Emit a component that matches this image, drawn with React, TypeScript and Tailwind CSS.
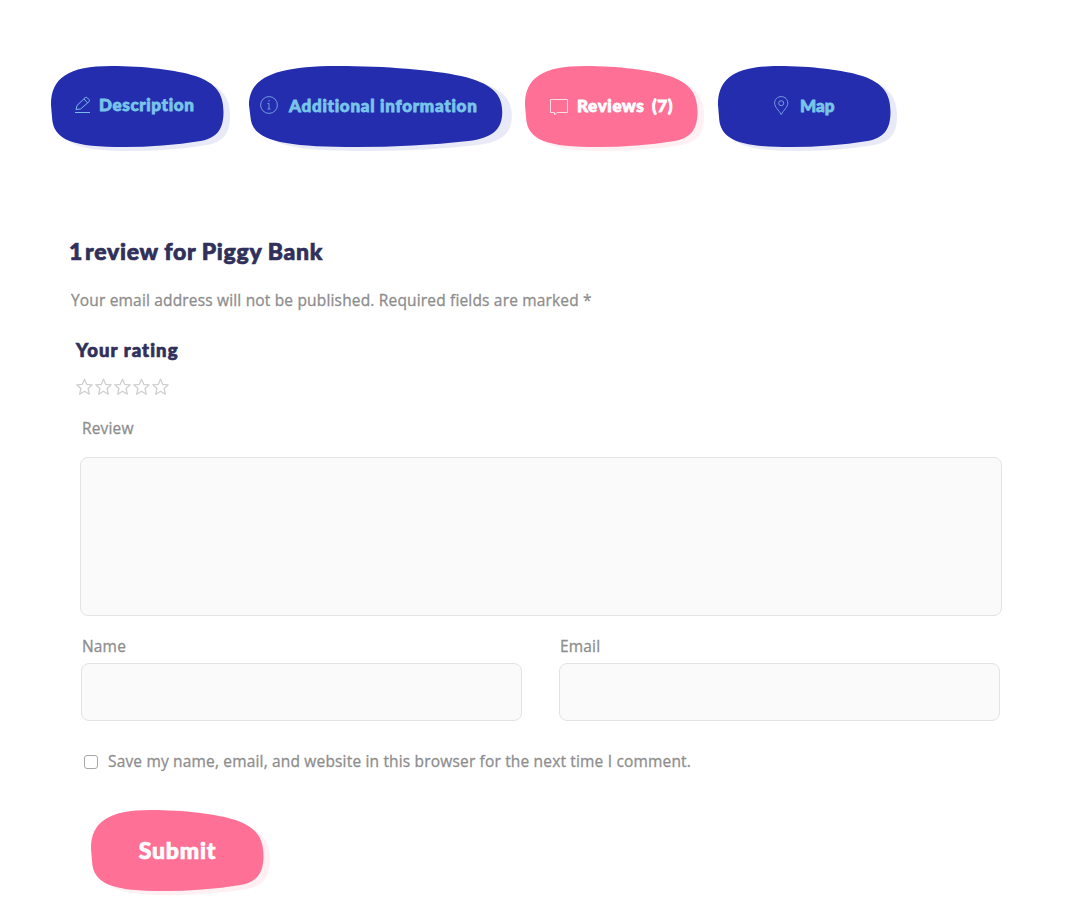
import type { ReactNode } from 'react';

const BLOB =
  'M0 39C0 12 17 0 60 0C93 0 125 4 144 10C164 17 172 27 172 46C172 64 165 72 149 75C124 79 98 81 73 81C23 81 2 75 1 51Z';

function Blob({ fill }: { fill: string }) {
  return (
    <svg
      className="absolute inset-0 h-full w-full overflow-visible"
      viewBox="0 0 172.5 81"
      preserveAspectRatio="none"
      fill={fill}
      aria-hidden="true"
    >
      <path d={BLOB} opacity="0.1" transform="translate(6.5 4)" />
      <path d={BLOB} />
    </svg>
  );
}

function Tab({ className, fill, children }: { className: string; fill: string; children: ReactNode }) {
  return (
    <button type="button" className={`relative flex h-[81px] shrink-0 ${className}`}>
      <Blob fill={fill} />
      {children}
    </button>
  );
}

const tabText =
  "relative whitespace-pre font-['Lato','Open_Sans',sans-serif] text-[17px] leading-6 font-black [-webkit-text-stroke:0.8px_currentColor]";
const bodyText =
  "font-['Open_Sans','Noto_Sans',sans-serif] text-[15.5px] leading-5 font-medium tracking-[0.17px] text-[#8d8d8d] [-webkit-text-stroke:0.3px_currentColor]";
const headText = "font-['Lato','Open_Sans',sans-serif] font-black text-[#30305a] [-webkit-text-stroke:0.7px_currentColor]";
const field = 'block rounded-lg border border-[#e3e3e3] bg-[#fafafa] outline-none';

function Star() {
  return (
    <svg width="19" height="18" viewBox="0 0 19 18" fill="none" stroke="#cfcfcf" strokeWidth="1.3" strokeLinejoin="round">
      <path d="M8.5 1.2L10.7 6.3L16.2 6.8L12.1 10.5L13.3 16.2L8.5 13.3L3.7 16.2L4.9 10.5L.8 6.8L6.3 6.3Z" />
    </svg>
  );
}

export default function App() {
  return (
    <main className="h-[912px] w-[1071px] overflow-hidden bg-white">
      <nav className="flex pt-[66px] pl-[51px]">
        <Tab className="w-[173px] pl-6" fill="#242dae">
          <svg className="relative mt-[30px]" width="16" height="18" viewBox="0 0 16 18" fill="none" stroke="#78bce9" strokeWidth="1">
            <path d="M1 13.5L2 9.5L10.2 1.6Q11.4 .9 12.5 2L14 3.5Q15 4.8 13.9 5.8L5.6 13L1 13.5M9 3L12.5 6.8M0 16.5H15" />
          </svg>
          <span className={`${tabText} mt-[27px] ml-2 tracking-[0.64px] text-[#78c5e9]`}>Description</span>
        </Tab>
        <Tab className="ml-[25px] w-[254px] pl-[11px]" fill="#242dae">
          <svg className="relative mt-[30px]" width="18" height="18" viewBox="0 0 18 18" fill="none" stroke="#78a8e3" strokeWidth=".9">
            <circle cx="9" cy="9" r="8.4" />
            <path d="M7.5 7.5H9V13M7.5 13H10.5M9 4V5.5" />
          </svg>
          <span className={`${tabText} mt-[28px] ml-[11px] tracking-[0.74px] text-[#78c5e9]`}>Additional information</span>
        </Tab>
        <Tab className="ml-[22px] w-[173px] pl-[25px]" fill="#ff7096">
          <svg className="relative mt-[33px]" width="19" height="18" viewBox="0 0 19 18" fill="none" stroke="#ffdbe5" strokeWidth="1">
            <path d="M.5 .5H17.5V13.5H7L4.5 16V13.5H.5Z" />
          </svg>
          <span className={`${tabText} mt-[28px] ml-2 tracking-[0.65px] [word-spacing:-1px] text-white`}>{'Reviews  (7)'}</span>
        </Tab>
        <Tab className="ml-5 w-[173px] pl-14" fill="#242dae">
          <svg className="relative mt-[30px]" width="15" height="20" viewBox="0 0 15 20" fill="none" stroke="#789ce2" strokeWidth="1">
            <path d="M7.2 18.5C5 14.3 .6 11 .6 7.2C.6 3.4 3.4 .6 7.2 .6S13.8 3.4 13.8 7.2C13.8 11 9.5 14.3 7.2 18.5Z" />
            <circle cx="7.2" cy="7.2" r="2.5" />
          </svg>
          <span className={`${tabText} mt-[28px] ml-[11px] text-[#78c5e9]`}>Map</span>
        </Tab>
      </nav>

      <section className="pt-[88px] pl-[69px]">
        <h2 className={`${headText} h-8 text-[23px] leading-8 tracking-[0.75px] [word-spacing:-0.5px]`}>
          <span className="tracking-[-3px]">1</span> review for Piggy Bank
        </h2>
        <p className={`${bodyText} mt-[23px] ml-[2px]`}>Your email address will not be published. Required fields are marked *</p>
        <h3 className={`${headText} mt-[28px] ml-[7px] text-[18.5px] leading-6 tracking-[1.1px]`}>Your rating</h3>
        <div className="mt-4 ml-[7px] flex h-[18px]">
          <Star /><Star /><Star /><Star /><Star />
        </div>
      </section>

      <form className="pl-[80px]" onSubmit={(event) => event.preventDefault()}>
        <label className={`${bodyText} mt-[22px] ml-[2px] block`} htmlFor="review">Review</label>
        <textarea id="review" className={`${field} mt-[19px] h-[159px] w-[922px] resize-none`} />
        <div className="mt-5 ml-px flex gap-[37px]">
          <div>
            <label className={`${bodyText} ml-px block`} htmlFor="name">Name</label>
            <input id="name" className={`${field} mt-[7px] h-[58px] w-[441px]`} />
          </div>
          <div>
            <label className={`${bodyText} ml-px block`} htmlFor="email">Email</label>
            <input id="email" className={`${field} mt-[7px] h-[58px] w-[441px]`} />
          </div>
        </div>
        <label className={`${bodyText} mt-[30px] ml-1 flex h-5 items-center`}>
          <input type="checkbox" className="mt-[2px] mr-[10px] h-[14px] w-[14px] appearance-none rounded-[3px] border border-[#a8a8a8] bg-white" />
          Save my name, email, and website in this browser for the next time I comment.
        </label>
        <button type="submit" className="relative mt-[39px] ml-[11px] flex h-[81px] w-[173px] justify-center">
          <Blob fill="#ff7096" />
          <span className="relative mt-[24px] font-['Lato','Open_Sans',sans-serif] text-[23px] leading-8 font-black tracking-[0.8px] text-white [-webkit-text-stroke:0.7px_currentColor]">Submit</span>
        </button>
      </form>
    </main>
  );
}
